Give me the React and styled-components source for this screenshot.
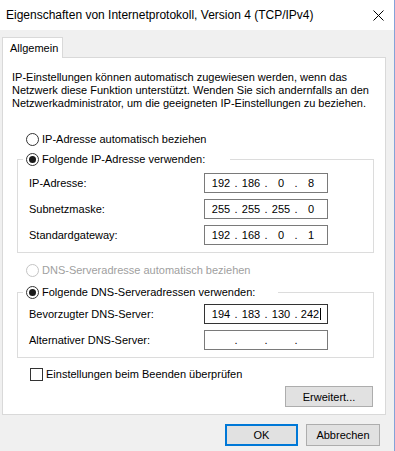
import React from "react";
import styled, { createGlobalStyle, css } from "styled-components";

const Global = createGlobalStyle`
  html, body {
    margin: 0;
    padding: 0;
    background: #fff;
  }
  body {
    font-family: "Liberation Sans", Arial, sans-serif;
    font-size: 11px;
    color: #000;
  }
  * {
    box-sizing: border-box;
  }
`;

const Window = styled.div`
  width: 395px;
  height: 451px;
  display: flex;
  flex-direction: column;
  background: #f0f0f0;
  border-right: 1px solid #85a2d8;
`;

const TitleBar = styled.div`
  height: 30px;
  flex: none;
  display: flex;
  align-items: center;
  justify-content: space-between;
  padding: 0 10px 0 6px;
  background: #fff;
`;

const Title = styled.div`
  font-size: 12px;
  white-space: nowrap;
`;

const Body = styled.div`
  flex: 1;
  display: flex;
  flex-direction: column;
  padding: 7px 8px 0 2px;
`;

const TabStrip = styled.div`
  display: flex;
`;

const Tab = styled.div`
  width: 61px;
  height: 21px;
  margin-bottom: -1px;
  position: relative;
  z-index: 1;
  display: flex;
  align-items: center;
  padding: 0 0 1px 7px;
  background: #fff;
  border: 1px solid #d9d9d9;
  border-bottom: none;
`;

const Panel = styled.div`
  height: 358px;
  display: flex;
  flex-direction: column;
  background: #fff;
  border: 1px solid #d9d9d9;
`;

const Intro = styled.p`
  margin: 13px 0 0 9px;
  line-height: 13px;
  white-space: nowrap;
`;

const Choice = styled.label`
  display: flex;
  align-items: center;
  gap: 3px;
  height: 16px;
  margin: ${(p) => p.$m || "0"};
  color: ${(p) => (p.$disabled ? "#a0a0a0" : "#000")};
  white-space: nowrap;
`;

const Dot = styled.span`
  width: 13px;
  height: 13px;
  flex: none;
  border-radius: 50%;
  border: 1px solid ${(p) => (p.$disabled ? "#c4c4c4" : "#333")};
  background: #fff;
  display: flex;
  align-items: center;
  justify-content: center;
  ${(p) =>
    p.$checked &&
    css`
      &::after {
        content: "";
        width: 7px;
        height: 7px;
        border-radius: 50%;
        background: #1a1a1a;
      }
    `}
`;

const Box = styled.span`
  width: 13px;
  height: 13px;
  flex: none;
  border: 1px solid #333;
  background: #fff;
`;

const Group = styled.fieldset`
  margin: ${(p) => p.$m};
  padding: ${(p) => p.$pad};
  width: 357px;
  border: 1px solid #dcdcdc;
  display: flex;
  flex-direction: column;
  gap: 6px;
  min-width: 0;
`;

const Legend = styled.legend`
  width: ${(p) => p.$w}px;
  margin-left: -6px;
  padding: 0 0 0 3px;
  float: none;
`;

const Row = styled.div`
  display: flex;
  align-items: center;
  height: 20px;
`;

const RowLabel = styled.span`
  width: 175px;
  flex: none;
  white-space: nowrap;
`;

const IpBox = styled.div`
  width: 124px;
  height: 20px;
  display: flex;
  align-items: center;
  padding: 0 3px;
  background: #fff;
  border: 1px solid ${(p) => (p.$focus ? "#333" : "#7a7a7a")};
`;

const Octet = styled.span`
  width: 26px;
  text-align: center;
`;

const Sep = styled.span`
  width: 4px;
  text-align: center;
`;

const Caret = styled.span`
  border-right: 1px solid #000;
  padding-right: 1px;
  line-height: 14px;
`;

const CheckRow = styled.label`
  display: flex;
  align-items: center;
  gap: 3px;
  height: 16px;
  margin: 8px 0 0 27px;
  white-space: nowrap;
`;

const Button = styled.button`
  font: inherit;
  color: #000;
  width: ${(p) => p.$w}px;
  height: ${(p) => p.$h}px;
  padding: 0;
  background: #e1e1e1;
  border: ${(p) => (p.$default ? "2px solid #0078d7" : "1px solid #adadad")};
`;

const Advanced = styled(Button)`
  align-self: flex-end;
  margin: 4px 12px 0 0;
`;

const Footer = styled.div`
  display: flex;
  justify-content: flex-end;
  gap: 8px;
  padding: 9px 6px 0 0;
`;

function Radio({ label, checked, disabled, m }) {
  return (
    <Choice $disabled={disabled} $m={m}>
      <Dot $checked={checked} $disabled={disabled} />
      {label}
    </Choice>
  );
}

function IpField({ parts, focus }) {
  const p = parts || ["", "", "", ""];
  return (
    <IpBox $focus={focus}>
      {p.map((v, i) => (
        <React.Fragment key={i}>
          {i > 0 && <Sep>.</Sep>}
          <Octet>{focus && i === 3 ? <Caret>{v}</Caret> : v}</Octet>
        </React.Fragment>
      ))}
    </IpBox>
  );
}

function CloseIcon() {
  return (
    <svg width="11" height="11" viewBox="0 0 11 11">
      <path d="M0.5 0.5 L10.5 10.5 M10.5 0.5 L0.5 10.5" stroke="#000" strokeWidth="1" />
    </svg>
  );
}

export default function App() {
  return (
    <>
      <Global />
      <Window>
        <TitleBar>
          <Title>Eigenschaften von Internetprotokoll, Version 4 (TCP/IPv4)</Title>
          <CloseIcon />
        </TitleBar>
        <Body>
          <TabStrip>
            <Tab>Allgemein</Tab>
          </TabStrip>
          <Panel>
            <Intro>
              IP-Einstellungen können automatisch zugewiesen werden, wenn das
              <br />
              Netzwerk diese Funktion unterstützt. Wenden Sie sich andernfalls an den
              <br />
              Netzwerkadministrator, um die geeigneten IP-Einstellungen zu beziehen.
            </Intro>
            <Radio m="21px 0 0 23px" label="IP-Adresse automatisch beziehen" />
            <Group $m="4px 0 0 14px" $pad="6px 0 7px 11px">
              <Legend $w={207}>
                <Radio checked label="Folgende IP-Adresse verwenden:" />
              </Legend>
              <Row>
                <RowLabel>IP-Adresse:</RowLabel>
                <IpField parts={["192", "186", "0", "8"]} />
              </Row>
              <Row>
                <RowLabel>Subnetzmaske:</RowLabel>
                <IpField parts={["255", "255", "255", "0"]} />
              </Row>
              <Row>
                <RowLabel>Standardgateway:</RowLabel>
                <IpField parts={["192", "168", "0", "1"]} />
              </Row>
            </Group>
            <Radio disabled m="9px 0 0 23px" label="DNS-Serveradresse automatisch beziehen" />
            <Group $m="6px 0 0 14px" $pad="4px 0 7px 11px">
              <Legend $w={255}>
                <Radio checked label="Folgende DNS-Serveradressen verwenden:" />
              </Legend>
              <Row>
                <RowLabel>Bevorzugter DNS-Server:</RowLabel>
                <IpField focus parts={["194", "183", "130", "242"]} />
              </Row>
              <Row>
                <RowLabel>Alternativer DNS-Server:</RowLabel>
                <IpField />
              </Row>
            </Group>
            <CheckRow>
              <Box />
              Einstellungen beim Beenden überprüfen
            </CheckRow>
            <Advanced $w={88} $h={21}>Erweitert...</Advanced>
          </Panel>
          <Footer>
            <Button $default $w={73} $h={22}>OK</Button>
            <Button $w={74} $h={22}>Abbrechen</Button>
          </Footer>
        </Body>
      </Window>
    </>
  );
}
